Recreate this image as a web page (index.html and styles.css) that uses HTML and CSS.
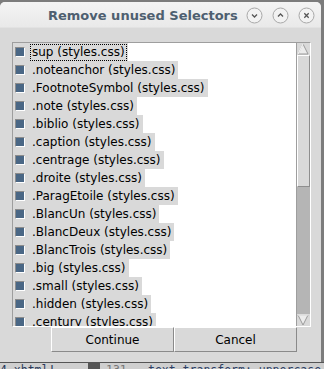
FILE: index.html
```html
<!DOCTYPE html>
<html lang="en">
<head>
    <meta charset="UTF-8">
    <meta name="viewport" content="width=device-width, initial-scale=1.0">
    <title>Remove unused Selectors</title>
<link rel="stylesheet" href="styles.css">
</head>
<body>
    <div class="screen">
        <div class="window">
            <div class="titlebar">
                <span class="title">Remove unused Selectors</span>
                <div class="wm-buttons">
                    <svg class="wm-btn" width="17" height="17" viewBox="0 0 17 17">
                        <circle cx="8.5" cy="8.5" r="7.5" fill="#f2f2f2" stroke="#a8a8a8"/>
                        <path d="M6 7.5 L8.5 10 L11 7.5" fill="none" stroke="#555" stroke-width="1.3"/>
                    </svg>
                    <svg class="wm-btn" width="17" height="17" viewBox="0 0 17 17">
                        <circle cx="8.5" cy="8.5" r="7.5" fill="#f2f2f2" stroke="#a8a8a8"/>
                        <path d="M6 9.5 L8.5 7 L11 9.5" fill="none" stroke="#555" stroke-width="1.3"/>
                    </svg>
                    <svg class="wm-btn" width="17" height="17" viewBox="0 0 17 17">
                        <circle cx="8.5" cy="8.5" r="7.5" fill="#f2f2f2" stroke="#a8a8a8"/>
                        <path d="M6.3 6.3 L10.7 10.7 M10.7 6.3 L6.3 10.7" fill="none" stroke="#555" stroke-width="1.3"/>
                    </svg>
                </div>
            </div>

            <div class="body">
                <div class="list-frame">
                    <div class="list">
                        <div class="row"><span class="check"></span><span class="label focused">sup (styles.css)</span></div>
                        <div class="row"><span class="check"></span><span class="label">.noteanchor (styles.css)</span></div>
                        <div class="row"><span class="check"></span><span class="label">.FootnoteSymbol (styles.css)</span></div>
                        <div class="row"><span class="check"></span><span class="label">.note (styles.css)</span></div>
                        <div class="row"><span class="check"></span><span class="label">.biblio (styles.css)</span></div>
                        <div class="row"><span class="check"></span><span class="label">.caption (styles.css)</span></div>
                        <div class="row"><span class="check"></span><span class="label">.centrage (styles.css)</span></div>
                        <div class="row"><span class="check"></span><span class="label">.droite (styles.css)</span></div>
                        <div class="row"><span class="check"></span><span class="label">.ParagEtoile (styles.css)</span></div>
                        <div class="row"><span class="check"></span><span class="label">.BlancUn (styles.css)</span></div>
                        <div class="row"><span class="check"></span><span class="label">.BlancDeux (styles.css)</span></div>
                        <div class="row"><span class="check"></span><span class="label">.BlancTrois (styles.css)</span></div>
                        <div class="row"><span class="check"></span><span class="label">.big (styles.css)</span></div>
                        <div class="row"><span class="check"></span><span class="label">.small (styles.css)</span></div>
                        <div class="row"><span class="check"></span><span class="label">.hidden (styles.css)</span></div>
                        <div class="row"><span class="check"></span><span class="label">.century (styles.css)</span></div>
                    </div>
                    <div class="scrollbar">
                        <svg class="arrow" width="12" height="12" viewBox="0 0 12 12">
                            <polygon points="6,1 11,11 1,11" fill="#ececec" stroke="#9a9a9a"/>
                            <polyline points="1,11 6,1" fill="none" stroke="#fff"/>
                        </svg>
                        <div class="slider"></div>
                        <div class="trough"></div>
                        <svg class="arrow" width="12" height="12" viewBox="0 0 12 12">
                            <polygon points="1,1 11,1 6,11" fill="#ececec" stroke="#9a9a9a"/>
                            <polyline points="1,1 11,1" fill="none" stroke="#fff"/>
                        </svg>
                    </div>
                </div>

                <div class="actions">
                    <button class="btn">Continue</button>
                    <button class="btn">Cancel</button>
                </div>
            </div>
        </div>
        <div class="statusbar">
            <span class="file">4.xhtml!</span><span class="mark"></span><span class="line-no">131</span><span class="code">text-transform: uppercase</span>
        </div>
    </div>
</body>
</html>
```

FILE: styles.css
```css
body{
    margin: 0;
    background-color: #6b6b6b;
}
.screen{
    width: 324px;
    height: 369px;
    overflow: hidden;
    background-color: #7c7c7c;
    display: flex;
    flex-direction: column;
}
.window{
    margin-top: 2px;
    width: 321px;
    height: 361px;
    background-color: #d9d9d9;
    border-radius: 5px 5px 0 0;
    display: flex;
    flex-direction: column;
    overflow: hidden;
}
.titlebar{
    height: 26px;
    background: linear-gradient(#f4f4f4, #e9e9e9);
    border-bottom: 1px solid #e2e2e2;
    display: flex;
    align-items: center;
    box-sizing: border-box;
}
.title{
    font-family: "DejaVu Sans", sans-serif;
    font-weight: bold;
    font-size: 13px;
    color: #4e5f70;
    padding-left: 48px;
    margin-top: 2px;
}
.wm-buttons{
    display: flex;
    gap: 9px;
    margin-left: auto;
    margin-right: 6px;
    margin-top: 2px;
}
.wm-btn{
    display: block;
}
.body{
    flex: 1;
    display: flex;
    flex-direction: column;
}
.list-frame{
    margin: 14px 0 0 12px;
    width: 299px;
    height: 285px;
    box-sizing: border-box;
    border: 1px solid #9e9e9e;
    border-right-color: #ffffff;
    border-bottom-color: #ffffff;
    display: flex;
}
.list{
    flex: 1;
    background-color: #ffffff;
    overflow: hidden;
}
.row{
    height: 18px;
    width: fit-content;
    background-color: #d9d9d9;
    display: flex;
    align-items: center;
    padding-right: 1px;
}
.check{
    width: 8px;
    height: 8px;
    margin-left: 2px;
    margin-right: 5px;
    background-color: #4a6785;
    border: 1px solid #8c8c8c;
    border-right-color: #ffffff;
    border-bottom-color: #ffffff;
}
.label{
    font-family: "DejaVu Sans", sans-serif;
    font-size: 12px;
    color: #000;
    padding: 0 1px;
    line-height: 15px;
    border: 1px dotted transparent;
}
.label.focused{
    border-color: #000;
}
.scrollbar{
    width: 13px;
    display: flex;
    flex-direction: column;
    border-left: 1px solid #9e9e9e;
    background-color: #d9d9d9;
}
.arrow{
    display: block;
    margin-left: 0;
}
.slider{
    height: 132px;
    box-sizing: border-box;
    border: 1px solid #8e8e8e;
    border-top-color: #ffffff;
    border-left-color: #ffffff;
    background-color: #d9d9d9;
}
.trough{
    flex: 1;
    background-color: #b5b5b5;
}
.actions{
    display: flex;
    margin-left: 51px;
}
.btn{
    width: 123px;
    height: 25px;
    margin: 0;
    padding: 0;
    background-color: #d9d9d9;
    border: 1px solid #8a8a8a;
    border-top-color: #ffffff;
    border-left-color: #ffffff;
    font-family: "DejaVu Sans", sans-serif;
    font-size: 12px;
    color: #000;
}
.statusbar{
    height: 6px;
    border-top: 1px solid #555;
    background-color: #cfcfcf;
    display: flex;
    align-items: flex-start;
    overflow: hidden;
    font-family: "DejaVu Sans Mono", monospace;
    font-size: 11.5px;
    line-height: 14px;
    color: #2a3a5a;
}
.file{
    width: 88px;
}
.mark{
    width: 12px;
    height: 6px;
    background-color: #555;
    margin-right: 6px;
}
.line-no{
    width: 42px;
    color: #777;
}
.code{
    color: #2d3f66;
}
```
